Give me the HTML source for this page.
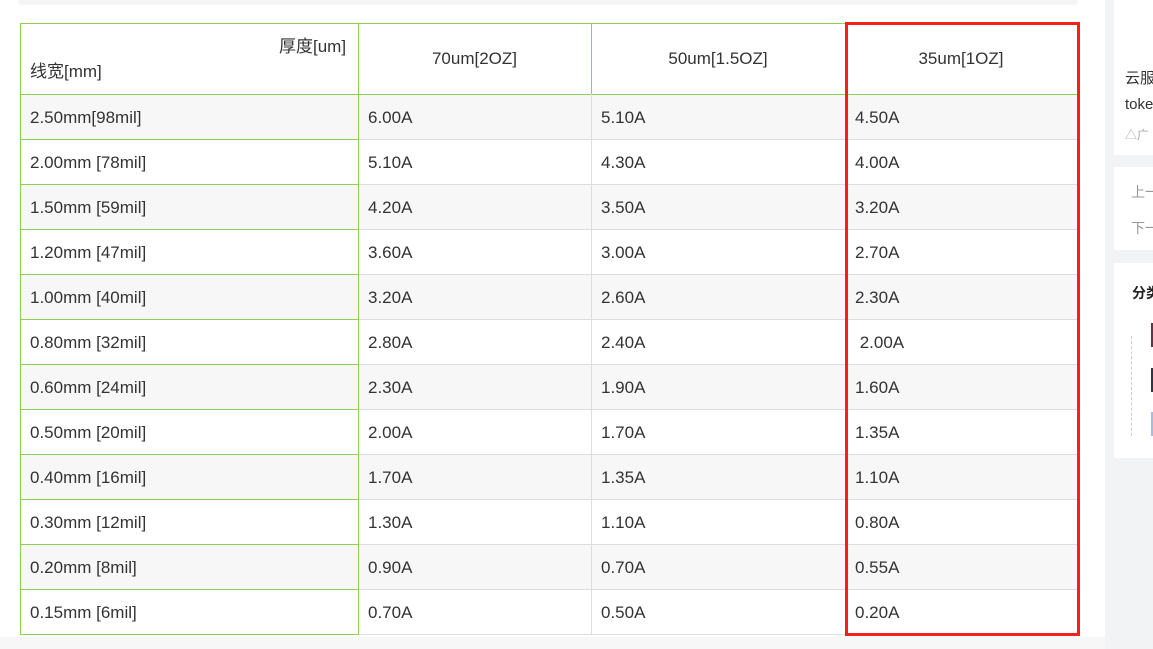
<!DOCTYPE html>
<html><head><meta charset="utf-8"><style>
body{margin:0;width:1153px;height:649px;overflow:hidden;background:#fff;font-family:"Liberation Sans","Noto Sans CJK SC",sans-serif;color:#333;position:relative}
.a{position:absolute}
.c{position:absolute;font-size:17px;line-height:45px;white-space:nowrap}
</style></head><body>
<div class="a" style="left:18px;top:0;width:1060px;height:5px;background:#f5f5f5;border-radius:0 0 4px 4px"></div>
<div class="a" style="left:1105px;top:0;width:48px;height:649px;background:#f2f3f5"></div>
<div class="a" style="left:1114px;top:0;width:39px;height:155px;background:#fff"></div>
<div class="a" style="left:1114px;top:167px;width:39px;height:83px;background:#fff"></div>
<div class="a" style="left:1114px;top:263px;width:39px;height:195px;background:#fff"></div>
<div class="a" style="left:0;top:637px;width:1105px;height:12px;background:#f7f7f7"></div>
<div class="c" style="left:1125px;top:56px;font-size:15px">云服</div>
<div class="c" style="left:1125px;top:82px;font-size:15px">toke</div>
<div class="c" style="left:1125px;top:113px;font-size:12px;color:#aab">△广</div>
<div class="c" style="left:1131px;top:170px;font-size:14px;color:#999">上一</div>
<div class="c" style="left:1131px;top:206px;font-size:14px;color:#999">下一</div>
<div class="c" style="left:1132px;top:271px;font-size:14px;font-weight:bold;color:#222">分类</div>
<div class="a" style="left:1131px;top:336px;height:100px;border-left:1px dashed #ccc"></div>
<div class="a" style="left:1151px;top:323px;width:2px;height:24px;background:#634"></div>
<div class="a" style="left:1151px;top:368px;width:2px;height:24px;background:#334"></div>
<div class="a" style="left:1151px;top:412px;width:2px;height:24px;background:#abd"></div>
<div id="t"></div>
<script>
var rows=[["2.50mm[98mil]","6.00A","5.10A","4.50A"],["2.00mm [78mil]","5.10A","4.30A","4.00A"],["1.50mm [59mil]","4.20A","3.50A","3.20A"],["1.20mm [47mil]","3.60A","3.00A","2.70A"],["1.00mm [40mil]","3.20A","2.60A","2.30A"],["0.80mm [32mil]","2.80A","2.40A"," 2.00A"],["0.60mm [24mil]","2.30A","1.90A","1.60A"],["0.50mm [20mil]","2.00A","1.70A","1.35A"],["0.40mm [16mil]","1.70A","1.35A","1.10A"],["0.30mm [12mil]","1.30A","1.10A","0.80A"],["0.20mm [8mil]","0.90A","0.70A","0.55A"],["0.15mm [6mil]","0.70A","0.50A","0.20A"]];
var xs=[20,358,591,845,1077],h='',L='';
for(var i=0;i<12;i++){var y=94+i*45;
h+='<div class="a" style="left:20px;top:'+y+'px;width:1057px;height:45px;background:'+(i%2?'#fff':'#f7f7f7')+'"></div>';
L+='<div class="a" style="left:358px;top:'+(y+45)+'px;width:719px;height:1px;background:#ddd"></div>';
L+='<div class="a" style="left:20px;top:'+(y+45)+'px;width:338px;height:1px;background:#8fd14f"></div>';
for(var j=0;j<4;j++)L+='<div class="c" style="left:'+(xs[j]+10)+'px;top:'+(y+1)+'px">'+rows[i][j].replace(' ','&nbsp;')+'</div>';}
h+=L;
h+='<div class="a" style="left:20px;top:23px;width:1057px;height:1px;background:#8fd14f"></div>';
h+='<div class="a" style="left:20px;top:94px;width:1057px;height:1px;background:#8fd14f"></div>';
h+='<div class="a" style="left:20px;top:23px;width:1px;height:612px;background:#8fd14f"></div>';
h+='<div class="a" style="left:358px;top:23px;width:1px;height:612px;background:#8fd14f"></div>';
h+='<div class="a" style="left:591px;top:23px;width:1px;height:612px;background:#ddd"></div>';
h+='<div class="a" style="left:591px;top:23px;width:1px;height:71px;background:#8fd14f"></div>';
h+='<div class="a" style="left:1077px;top:23px;width:1px;height:612px;background:#ddd"></div>';
h+='<div class="c" style="left:279px;top:24px;">厚度[um]</div>';
h+='<div class="c" style="left:30px;top:49px;">线宽[mm]</div>';
h+='<div class="c" style="left:358px;width:233px;text-align:center;top:36px">70um[2OZ]</div>';
h+='<div class="c" style="left:591px;width:254px;text-align:center;top:36px">50um[1.5OZ]</div>';
h+='<div class="c" style="left:845px;width:232px;text-align:center;top:36px">35um[1OZ]</div>';
h+='<div class="a" style="left:845px;top:22px;width:229px;height:608px;border:3px solid #f5201a"></div>';
document.getElementById('t').innerHTML=h;
</script>
</body></html>
